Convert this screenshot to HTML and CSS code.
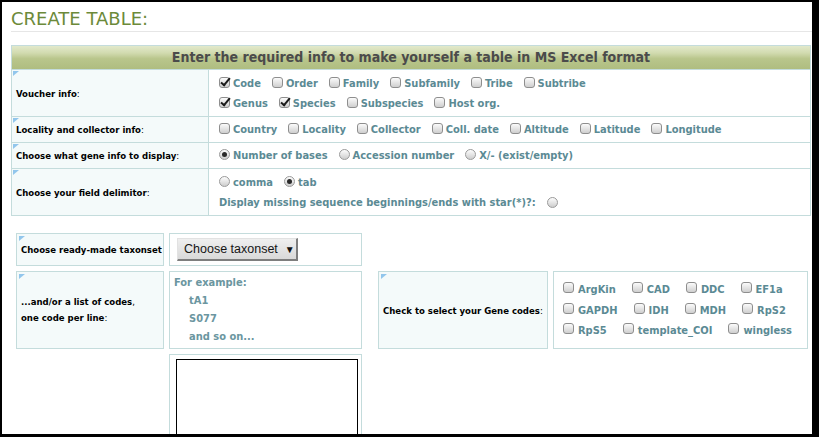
FILE: index.html
```html
<!DOCTYPE html>
<html>
<head>
<meta charset="utf-8">
<link rel="stylesheet" href="styles.css">
</head>
<body>
<div class="page">
  <h1 class="title">CREATE TABLE:</h1>

  <div class="form-table">
    <div class="hdr">Enter the required info to make yourself a table in MS Excel format</div>

    <div class="lbl"><span class="tri"></span><b>Voucher info</b>:</div>
    <div class="val">
      <div class="line">
        <span class="opt"><span class="cb on"></span>Code</span>
        <span class="opt"><span class="cb"></span>Order</span>
        <span class="opt"><span class="cb"></span>Family</span>
        <span class="opt"><span class="cb"></span>Subfamily</span>
        <span class="opt"><span class="cb"></span>Tribe</span>
        <span class="opt"><span class="cb"></span>Subtribe</span>
      </div>
      <div class="line">
        <span class="opt"><span class="cb on"></span>Genus</span>
        <span class="opt"><span class="cb on"></span>Species</span>
        <span class="opt"><span class="cb"></span>Subspecies</span>
        <span class="opt"><span class="cb"></span>Host org.</span>
      </div>
    </div>

    <div class="lbl"><span class="tri"></span><b>Locality and collector info</b>:</div>
    <div class="val">
      <div class="line">
        <span class="opt"><span class="cb"></span>Country</span>
        <span class="opt"><span class="cb"></span>Locality</span>
        <span class="opt"><span class="cb"></span>Collector</span>
        <span class="opt"><span class="cb"></span>Coll. date</span>
        <span class="opt"><span class="cb"></span>Altitude</span>
        <span class="opt"><span class="cb"></span>Latitude</span>
        <span class="opt"><span class="cb"></span>Longitude</span>
      </div>
    </div>

    <div class="lbl"><span class="tri"></span><b>Choose what gene info to display</b>:</div>
    <div class="val">
      <div class="line">
        <span class="opt"><span class="rb on"></span>Number of bases</span>
        <span class="opt"><span class="rb"></span>Accession number</span>
        <span class="opt"><span class="rb"></span>X/- (exist/empty)</span>
      </div>
    </div>

    <div class="lbl"><span class="tri"></span><b>Choose your field delimitor</b>:</div>
    <div class="val">
      <div class="line">
        <span class="opt"><span class="rb"></span>comma</span>
        <span class="opt"><span class="rb on"></span>tab</span>
      </div>
      <div class="line">
        <span class="opt star">Display missing sequence beginnings/ends with star(*)?:<span class="rb"></span></span>
      </div>
    </div>
  </div>

  <div class="lower">
    <div class="box lbox cell-a"><span class="tri"></span><b>Choose ready-made taxonset</b></div>
    <div class="box sbox cell-b"><span class="btn">Choose taxonset<span class="arr">&#9660;</span></span></div>

    <div class="box lbox cell-c"><span class="tri"></span><div class="two"><b>...and/or a list of codes</b>,<br><b>one code per line</b>:</div></div>
    <div class="box example cell-d">
      <div class="ex-line">For example:</div>
      <div class="ex-line ind">tA1</div>
      <div class="ex-line ind">S077</div>
      <div class="ex-line ind">and so on...</div>
    </div>

    <div class="box lbox cell-f"><span class="tri"></span><b>Check to select your Gene codes</b>:</div>
    <div class="box genes cell-g">
      <div class="grow">
        <span class="gopt"><span class="cb"></span>ArgKin</span>
        <span class="gopt"><span class="cb"></span>CAD</span>
        <span class="gopt"><span class="cb"></span>DDC</span>
        <span class="gopt"><span class="cb"></span>EF1a</span>
      </div>
      <div class="grow">
        <span class="gopt"><span class="cb"></span>GAPDH</span>
        <span class="gopt"><span class="cb"></span>IDH</span>
        <span class="gopt"><span class="cb"></span>MDH</span>
        <span class="gopt"><span class="cb"></span>RpS2</span>
      </div>
      <div class="grow">
        <span class="gopt"><span class="cb"></span>RpS5</span>
        <span class="gopt"><span class="cb"></span>template_COI</span>
        <span class="gopt"><span class="cb"></span>wingless</span>
      </div>
    </div>

    <div class="box tbox cell-e"><textarea class="codes"></textarea></div>
  </div>
</div>
</body>
</html>
```

FILE: styles.css
```css
html { background: #000; }
body { margin: 0; }

.page {
  margin: 2px 7px 0 2px;
  width: 810px;
  height: 432px;
  background: #fff;
  overflow: hidden;
  font-family: "DejaVu Sans Condensed", "DejaVu Sans", sans-serif;
}

.title {
  margin: 0 0 0 9px;
  padding: 6px 0 1px;
  font-family: "DejaVu Sans", sans-serif;
  font-weight: normal;
  font-size: 18px;
  line-height: 22px;
  color: #6c8a3a;
  border-bottom: 1px solid #e6e6e6;
}

.form-table {
  display: grid;
  grid-template-columns: 197px 602px;
  grid-template-rows: 24px 47px 26px 26px 47px;
  width: 800px;
  box-sizing: border-box;
  margin: 13px 0 0 9px;
  border-top: 1px solid #c4dcdc;
  border-left: 1px solid #c4dcdc;
}

.hdr {
  grid-column: 1 / -1;
  border-right: 1px solid #c4dcdc;
  border-bottom: 1px solid #c4dcdc;
  background: linear-gradient(#e2e9cb 0%, #d2dbb0 30%, #b9c68c 55%, #afbd80 100%);
  text-align: center;
  font-weight: bold;
  font-size: 14px;
  line-height: 23px;
  color: #4b4b4b;
}

.lbl {
  position: relative;
  display: flex;
  align-items: center;
  padding-left: 4px;
  border-right: 1px solid #c4dcdc;
  border-bottom: 1px solid #c4dcdc;
  background: #f4fafa;
  font-size: 9.5px;
  color: #000;
}

.tri {
  position: absolute;
  top: 1px;
  left: 1px;
  width: 0;
  height: 0;
  border-top: 5px solid #92c6ec;
  border-right: 6px solid transparent;
}

.val {
  display: flex;
  flex-direction: column;
  justify-content: center;
  padding-left: 10px;
  border-right: 1px solid #c4dcdc;
  border-bottom: 1px solid #c4dcdc;
}

.line {
  display: flex;
  align-items: center;
  height: 20px;
}

.opt {
  display: inline-flex;
  align-items: center;
  margin-right: 11px;
  font-weight: bold;
  font-size: 11px;
  color: #5b8a94;
  white-space: nowrap;
}

.opt .cb, .opt .rb { margin-right: 3px; }
.star .rb { margin: 0 0 0 11px; }

.cb {
  position: relative;
  display: inline-block;
  width: 11px;
  height: 11px;
  box-sizing: border-box;
  border: 1px solid #8e8e8e;
  border-radius: 3px;
  background: linear-gradient(#fbfbfb, #cfcfcf);
  margin-bottom: 2px;
}
.cb.on::after {
  content: "";
  position: absolute;
  left: 3px;
  top: -2px;
  width: 3px;
  height: 8px;
  border-right: 2px solid #1a1a1a;
  border-bottom: 2px solid #1a1a1a;
  transform: rotate(40deg);
}

.rb {
  position: relative;
  display: inline-block;
  width: 11px;
  height: 11px;
  box-sizing: border-box;
  border: 1px solid #9a9a9a;
  border-radius: 50%;
  background: linear-gradient(#fdfdfd, #cdcdcd);
  margin-bottom: 2px;
}
.rb.on::after {
  content: "";
  position: absolute;
  left: 2px;
  top: 2px;
  width: 5px;
  height: 5px;
  border-radius: 50%;
  background: #2a2a2a;
}

.lower {
  display: grid;
  grid-template-columns: 148px 193px 181px 255px;
  grid-template-rows: 33px 78px 100px;
  gap: 5px;
  margin: 17px 0 0 14px;
}

.box {
  box-sizing: border-box;
  border: 1px solid #c4dcdc;
}

.lbox {
  position: relative;
  display: flex;
  align-items: center;
  padding-left: 4px;
  background: #f4fafa;
  font-size: 9.5px;
  color: #000;
}
.lbox .tri { top: 2px; left: 2px; }
.two { line-height: 16px; }

.cell-a { grid-column: 1; grid-row: 1; }
.cell-b { grid-column: 2; grid-row: 1; }
.cell-c { grid-column: 1; grid-row: 2; }
.cell-d { grid-column: 2; grid-row: 2; }
.cell-f { grid-column: 3; grid-row: 2; margin-left: 11px; }
.cell-g { grid-column: 4; grid-row: 2; }
.cell-e { grid-column: 2; grid-row: 3; }

.sbox {
  display: flex;
  align-items: center;
  padding-left: 7px;
}

.btn {
  display: inline-flex;
  align-items: center;
  box-sizing: border-box;
  width: 121px;
  height: 23px;
  padding-left: 6px;
  background: linear-gradient(#efefef, #d9d9d9);
  border-top: 1px solid #e2e2e2;
  border-left: 1px solid #e2e2e2;
  border-right: 2px solid #7e7e7e;
  border-bottom: 2px solid #7e7e7e;
  font-family: "Liberation Sans", Arial, sans-serif;
  font-size: 12.5px;
  color: #151515;
}
.arr {
  margin-left: 7px;
  font-size: 10px;
  color: #111;
}

.example {
  display: flex;
  flex-direction: column;
  justify-content: center;
  padding-left: 4px;
  font-weight: bold;
  font-size: 11px;
  color: #6b96a0;
}
.ex-line { line-height: 18px; }
.ex-line.ind { padding-left: 15px; }

.genes {
  display: flex;
  flex-direction: column;
  justify-content: center;
  padding-left: 9px;
}
.grow {
  display: flex;
  align-items: center;
  gap: 16px;
  height: 20.5px;
}
.gopt {
  display: inline-flex;
  align-items: center;
  font-weight: bold;
  font-size: 11px;
  color: #5b8a94;
  white-space: nowrap;
}
.gopt .cb { margin-right: 4px; margin-bottom: 4px; }

.tbox {
  padding: 4px 3px 0 6px;
}
.codes {
  display: block;
  width: 182px;
  height: 90px;
  box-sizing: border-box;
  margin: 0;
  border: 1px solid #000;
  resize: none;
  background: #fff;
}
```
